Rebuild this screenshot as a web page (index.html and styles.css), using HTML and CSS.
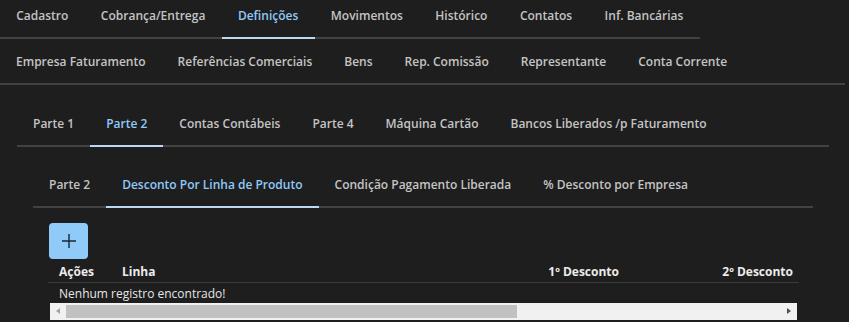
FILE: index.html
```html
<!DOCTYPE html>
<html lang="pt-BR">
<head>
<meta charset="utf-8">
<title>Definições</title>
<link rel="stylesheet" href="styles.css">
</head>
<body>
<div class="page">
  <nav class="tabs tabs-top">
    <span class="tab">Cadastro</span>
    <span class="tab">Cobrança/Entrega</span>
    <span class="tab active">Definições</span>
    <span class="tab">Movimentos</span>
    <span class="tab">Histórico</span>
    <span class="tab">Contatos</span>
    <span class="tab">Inf. Bancárias</span>
  </nav>
  <nav class="tabs tabs-full">
    <span class="tab">Empresa Faturamento</span>
    <span class="tab">Referências Comerciais</span>
    <span class="tab">Bens</span>
    <span class="tab">Rep. Comissão</span>
    <span class="tab">Representante</span>
    <span class="tab">Conta Corrente</span>
  </nav>
  <section class="panel">
    <nav class="tabs tabs-full">
      <span class="tab">Parte 1</span>
      <span class="tab active">Parte 2</span>
      <span class="tab">Contas Contábeis</span>
      <span class="tab">Parte 4</span>
      <span class="tab">Máquina Cartão</span>
      <span class="tab">Bancos Liberados /p Faturamento</span>
    </nav>
    <section class="panel">
      <nav class="tabs tabs-full">
        <span class="tab">Parte 2</span>
        <span class="tab active">Desconto Por Linha de Produto</span>
        <span class="tab">Condição Pagamento Liberada</span>
        <span class="tab">% Desconto por Empresa</span>
      </nav>
      <div class="content">
        <button class="add-btn" type="button" aria-label="Adicionar">
          <svg width="16" height="16" viewBox="0 0 16 16"><path d="M8 1v14M1 8h14" stroke="#1b2631" stroke-width="1.4" fill="none"/></svg>
        </button>
        <div class="table-wrap">
          <div class="grid head">
            <div class="cell">Ações</div>
            <div class="cell">Linha</div>
            <div class="cell right">1º Desconto</div>
            <div class="cell right">2º Desconto</div>
            <div class="cell right"></div>
          </div>
          <div class="empty">Nenhum registro encontrado!</div>
        </div>
        <div class="hscroll">
          <span class="arrow left"></span>
          <span class="track"><span class="thumb"></span></span>
          <span class="arrow right"></span>
        </div>
      </div>
    </section>
  </section>
</div>
</body>
</html>
```

FILE: styles.css
```css
* { box-sizing: border-box; }
html, body {
  margin: 0;
  background: #1e1e1e;
}
body {
  font-family: "Open Sans", "Noto Sans", sans-serif;
  color: #c6c6c6;
  overflow: hidden;
}
.page {
  width: 849px;
  height: 322px;
  padding-right: 4px;
}
.tabs {
  display: flex;
  border-bottom: 2px solid #424242;
}
.tabs-top {
  display: inline-flex;
}
.tab {
  font-size: 12px;
  font-weight: 600;
  line-height: 18px;
  padding: 14px 16px 12px;
  margin-bottom: -2px;
  border-bottom: 2px solid transparent;
  white-space: nowrap;
  color: #c4c4c4;
}
.tabs-top .tab {
  padding-top: 7px;
  padding-left: 16.25px;
  padding-right: 16.25px;
}
.tab.active {
  color: #90caf9;
  border-bottom-color: #bcd8f2;
}
.panel {
  padding: 16px 16px 0 17px;
}
.panel .panel {
  padding: 15px 16px 0 16px;
}
.content {
  padding: 15px 16px 0 16px;
}
.add-btn {
  display: flex;
  align-items: center;
  justify-content: center;
  width: 39px;
  height: 36px;
  padding: 0;
  border: none;
  border-radius: 4px;
  background: #90caf9;
}
.table-wrap {
  width: 751px;
  margin-left: -1px;
  overflow: hidden;
}
.grid {
  display: grid;
  grid-template-columns: 63px 347px 172px 174px 174px;
  width: 930px;
}
.head {
  border-bottom: 1px solid #3a3a3a;
}
.cell {
  font-size: 12px;
  font-weight: 700;
  line-height: 16px;
  padding: 5px 11px 2px;
  color: #ececec;
  white-space: nowrap;
}
.cell.right {
  text-align: right;
}
.empty {
  font-size: 12px;
  line-height: 16px;
  padding: 3px 11px 1px;
  color: #e6e6e6;
}
.hscroll {
  display: flex;
  width: 747px;
  height: 17px;
  margin-left: 1px;
  background: #f1f1f1;
}
.arrow {
  width: 16px;
  height: 17px;
  position: relative;
}
.arrow::after {
  content: "";
  position: absolute;
  top: 5px;
  border-top: 3.5px solid transparent;
  border-bottom: 3.5px solid transparent;
}
.arrow.left::after {
  left: 6px;
  border-right: 4px solid #a3a3a3;
}
.arrow.right::after {
  left: 6px;
  border-left: 4px solid #505050;
}
.track {
  flex: 1;
  padding: 2px 0;
}
.thumb {
  display: block;
  width: 451px;
  height: 13px;
  background: #c1c1c1;
}
```
